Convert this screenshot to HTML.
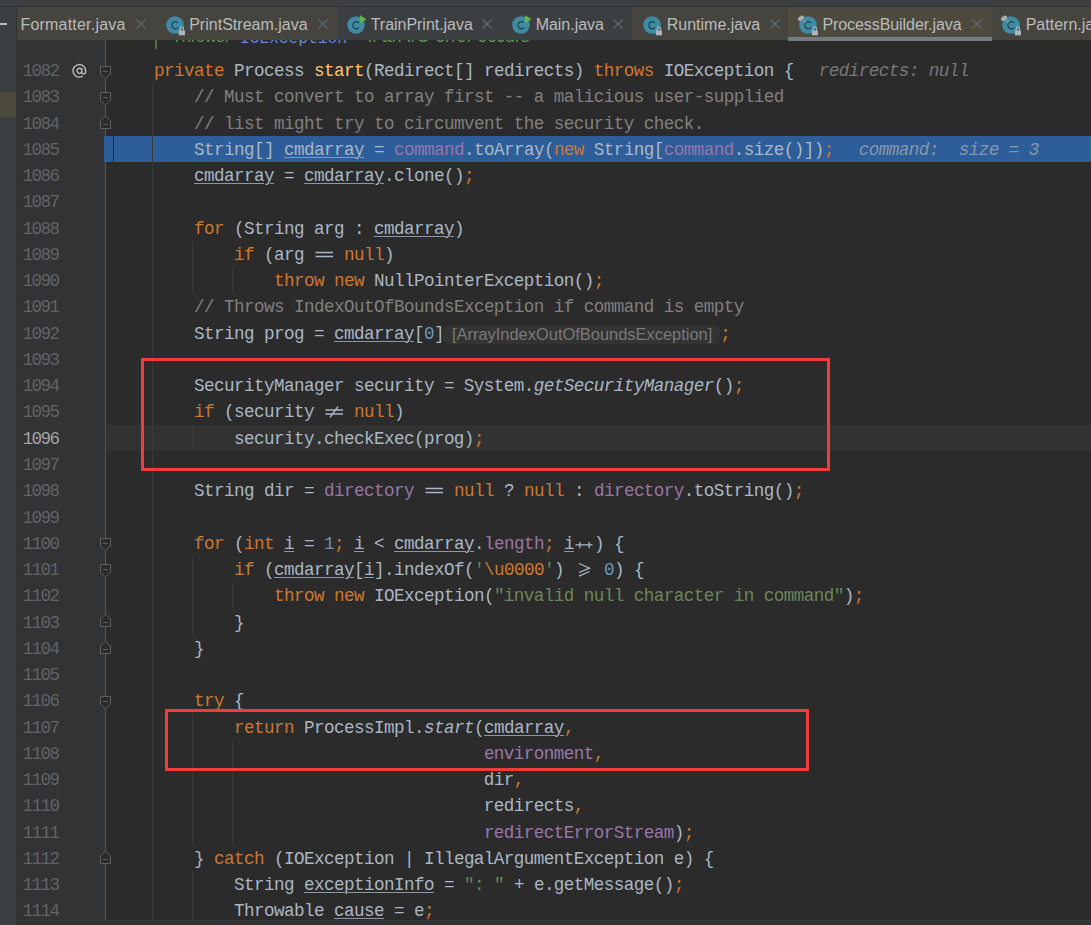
<!DOCTYPE html>
<html><head><meta charset="utf-8"><style>
*{margin:0;padding:0;box-sizing:border-box}
html,body{width:1091px;height:925px;overflow:hidden;background:#2b2b2b}
body{position:relative;font-family:"Liberation Mono",monospace}
.abs{position:absolute}
.ln{position:absolute;left:114px;height:26.260px;line-height:26.260px;font-size:17.600px;letter-spacing:-0.5617px;white-space:pre;color:#a9b7c6}
.k{color:#cc7832}.c{color:#808080}.f{color:#9876aa}.n{color:#6897bb}.s{color:#6a8759}.fn{color:#ffc66d}
.i{font-style:italic}.u{text-decoration:underline;text-decoration-thickness:1px;text-underline-offset:2px;text-decoration-color:#8b96a8}
.e{color:#cc7832}
.lig{position:relative;display:inline-block;width:20px;height:0;letter-spacing:0}
.num{position:absolute;left:0;width:58.5px;text-align:right;height:26.260px;line-height:26.260px;font-size:17.600px;letter-spacing:-1.56px;color:#606366;white-space:pre}
.hint{color:#787878;font-style:italic;margin-left:25px}
.inlay{display:inline-block;font-family:"Liberation Sans",sans-serif;font-size:16.45px;letter-spacing:0;color:#7a7a7a;background:#333333;border-radius:6px;height:19px;line-height:19px;vertical-align:-1px;padding:0 8px 0 9px;margin:0 0 0 -1px}
.guide{position:absolute;width:1px;background:#393939}
.fold{position:absolute;left:100px}
.tab{position:absolute;top:8.4px;height:33px;font-family:"Liberation Sans",sans-serif;font-size:16px;color:#bbbbbb;line-height:33px;white-space:pre}
.tab .t{position:absolute;top:0}
.tab .x{position:absolute;top:12px}
.redbox{position:absolute;border:3px solid #f23c3c}
</style></head><body>

<div class="abs" style="left:0;top:0;width:1091px;height:6px;background:#3c3f41"></div>
<div class="abs" style="left:0;top:6px;width:1091px;height:1px;background:#2e3032"></div>
<div class="abs" style="left:0;top:7px;width:1091px;height:33px;background:#3c3f41"></div>
<div class="abs" style="left:0;top:40px;width:16px;height:885px;background:#3c3f41"></div>
<div class="abs" style="left:0;top:92px;width:16px;height:25px;background:#4d4a3e"></div>
<div class="abs" style="left:16px;top:40px;width:89px;height:880px;background:#313335"></div>
<div class="abs" style="left:16px;top:920px;width:1075px;height:5px;background:#313335"></div>
<div class="abs" style="left:16px;top:920px;width:1075px;height:1px;background:#393b3d"></div>
<div class="abs" style="left:104px;top:424.54px;width:987px;height:26.26px;background:#323232"></div>
<div class="abs" style="left:104px;top:135.68px;width:987px;height:26.26px;background:#2d5e99"></div>
<div class="abs" style="left:113px;top:135.68px;width:1px;height:26.26px;background:#2b2b2b"></div>
<div class="abs" style="left:105px;top:40px;width:1px;height:880px;background:#555555"></div>
<div class="guide" style="left:152px;top:83.16px;height:840.32px"></div>
<div class="guide" style="left:192px;top:240.72px;height:52.52px"></div>
<div class="guide" style="left:232px;top:266.98px;height:26.26px"></div>
<div class="guide" style="left:192px;top:555.84px;height:78.78px"></div>
<div class="guide" style="left:232px;top:582.10px;height:26.26px"></div>
<div class="guide" style="left:192px;top:424.54px;height:26.26px"></div>
<div class="guide" style="left:192px;top:713.40px;height:131.30px"></div>
<div class="guide" style="left:232px;top:739.66px;height:105.04px"></div>
<div class="guide" style="left:192px;top:870.96px;height:52.52px"></div>
<div class="abs" style="left:155px;top:40px;width:2px;height:9px;background:#4f6f44"></div>
<div class="abs" style="left:172px;top:27px;height:19px;line-height:19px;font-family:'Liberation Sans',sans-serif;font-size:16px;white-space:pre;color:#629755">Throws:</div>
<div class="abs" style="left:240px;top:30px;height:19px;line-height:19px;font-size:16.2px;white-space:pre;color:#5f8ad6">IOException</div>
<div class="abs" style="left:368px;top:27px;height:19px;line-height:19px;font-family:'Liberation Sans',sans-serif;font-size:17.5px;letter-spacing:0.1px;white-space:pre;color:#629755">if an I/O error occurs</div>
<div class="ln" style="top:58.087px">    <span class="k">private</span> Process <span class="fn">start</span>(Redirect[] redirects) <span class="k">throws</span> IOException {<span class="hint">redirects: null</span></div>
<div class="num" style="top:58.087px;color:#606366">1082</div>
<div class="ln" style="top:84.347px">        <span class="c">// Must convert to array first -- a malicious user-supplied</span></div>
<div class="num" style="top:84.347px;color:#606366">1083</div>
<div class="ln" style="top:110.607px">        <span class="c">// list might try to circumvent the security check.</span></div>
<div class="num" style="top:110.607px;color:#606366">1084</div>
<div class="ln" style="top:136.867px">        String[] <span class="u">cmdarray</span> = <span class="f">command</span>.toArray(<span class="k">new</span> String[<span class="f">command</span>.size()])<span class="k">;</span><span class="hint" style="color:#8797ae">command:  size = 3</span></div>
<div class="num" style="top:136.867px;color:#606366">1085</div>
<div class="ln" style="top:163.127px">        <span class="u">cmdarray</span> = <span class="u">cmdarray</span>.clone()<span class="k">;</span></div>
<div class="num" style="top:163.127px;color:#606366">1086</div>
<div class="ln" style="top:189.387px"></div>
<div class="num" style="top:189.387px;color:#606366">1087</div>
<div class="ln" style="top:215.647px">        <span class="k">for</span> (String arg : <span class="u">cmdarray</span>)</div>
<div class="num" style="top:215.647px;color:#606366">1088</div>
<div class="ln" style="top:241.907px">            <span class="k">if</span> (arg <span class="lig"><svg width="20" height="16" style="position:absolute;left:0;top:-13px" fill="none" stroke="#a9b7c6" stroke-width="1.3"><path d="M1.5,5.5 H19 M1.5,9.5 H19"/></svg></span> <span class="k">null</span>)</div>
<div class="num" style="top:241.907px;color:#606366">1089</div>
<div class="ln" style="top:268.167px">                <span class="k">throw new</span> NullPointerException()<span class="k">;</span></div>
<div class="num" style="top:268.167px;color:#606366">1090</div>
<div class="ln" style="top:294.427px">        <span class="c">// Throws IndexOutOfBoundsException if command is empty</span></div>
<div class="num" style="top:294.427px;color:#606366">1091</div>
<div class="ln" style="top:320.687px">        String prog = <span class="u">cmdarray</span>[<span class="n">0</span>]<span class="inlay">[ArrayIndexOutOfBoundsException]</span><span class="k">;</span></div>
<div class="num" style="top:320.687px;color:#606366">1092</div>
<div class="ln" style="top:346.947px"></div>
<div class="num" style="top:346.947px;color:#606366">1093</div>
<div class="ln" style="top:373.207px">        SecurityManager security = System.<span class="i">getSecurityManager</span>()<span class="k">;</span></div>
<div class="num" style="top:373.207px;color:#606366">1094</div>
<div class="ln" style="top:399.467px">        <span class="k">if</span> (security <span class="lig"><svg width="20" height="16" style="position:absolute;left:0;top:-13px" fill="none" stroke="#a9b7c6" stroke-width="1.3"><path d="M1.5,6 H19 M1.5,10 H19 M6,13.5 L14,2.5"/></svg></span> <span class="k">null</span>)</div>
<div class="num" style="top:399.467px;color:#606366">1095</div>
<div class="ln" style="top:425.727px">            security.checkExec(prog)<span class="k">;</span></div>
<div class="num" style="top:425.727px;color:#a4a3a3">1096</div>
<div class="ln" style="top:451.987px"></div>
<div class="num" style="top:451.987px;color:#606366">1097</div>
<div class="ln" style="top:478.247px">        String dir = <span class="f">directory</span> <span class="lig"><svg width="20" height="16" style="position:absolute;left:0;top:-13px" fill="none" stroke="#a9b7c6" stroke-width="1.3"><path d="M1.5,5.5 H19 M1.5,9.5 H19"/></svg></span> <span class="k">null</span> ? <span class="k">null</span> : <span class="f">directory</span>.toString()<span class="k">;</span></div>
<div class="num" style="top:478.247px;color:#606366">1098</div>
<div class="ln" style="top:504.507px"></div>
<div class="num" style="top:504.507px;color:#606366">1099</div>
<div class="ln" style="top:530.767px">        <span class="k">for</span> (<span class="k">int</span> <span class="u">i</span> = <span class="n">1</span><span class="k">;</span> <span class="u">i</span> &lt; <span class="u">cmdarray</span>.<span class="f">length</span><span class="k">;</span> <span class="u">i</span><span class="lig"><svg width="20" height="16" style="position:absolute;left:0;top:-13px" fill="none" stroke="#a9b7c6" stroke-width="1.3"><path d="M1.5,8.8 H18.5 M5.8,6 V12.2 M15.2,6 V12.2"/></svg></span>) {</div>
<div class="num" style="top:530.767px;color:#606366">1100</div>
<div class="ln" style="top:557.027px">            <span class="k">if</span> (<span class="u">cmdarray</span>[<span class="u">i</span>].indexOf(<span class="s">&#x27;</span><span class="e">\u0000</span><span class="s">&#x27;</span>) <span class="lig"><svg width="20" height="16" style="position:absolute;left:0;top:-13px" fill="none" stroke="#a9b7c6" stroke-width="1.3"><path d="M5,1.5 L15.5,6.2 L5,10.5 M5,14.2 L15.5,9.5"/></svg></span> <span class="n">0</span>) {</div>
<div class="num" style="top:557.027px;color:#606366">1101</div>
<div class="ln" style="top:583.287px">                <span class="k">throw new</span> IOException(<span class="s">&quot;invalid null character in command&quot;</span>)<span class="k">;</span></div>
<div class="num" style="top:583.287px;color:#606366">1102</div>
<div class="ln" style="top:609.547px">            }</div>
<div class="num" style="top:609.547px;color:#606366">1103</div>
<div class="ln" style="top:635.807px">        }</div>
<div class="num" style="top:635.807px;color:#606366">1104</div>
<div class="ln" style="top:662.067px"></div>
<div class="num" style="top:662.067px;color:#606366">1105</div>
<div class="ln" style="top:688.327px">        <span class="k">try</span> {</div>
<div class="num" style="top:688.327px;color:#606366">1106</div>
<div class="ln" style="top:714.587px">            <span class="k">return</span> ProcessImpl.<span class="i">start</span>(<span class="u">cmdarray</span><span class="k">,</span></div>
<div class="num" style="top:714.587px;color:#606366">1107</div>
<div class="ln" style="top:740.847px">                                     <span class="f">environment</span><span class="k">,</span></div>
<div class="num" style="top:740.847px;color:#606366">1108</div>
<div class="ln" style="top:767.107px">                                     dir<span class="k">,</span></div>
<div class="num" style="top:767.107px;color:#606366">1109</div>
<div class="ln" style="top:793.367px">                                     redirects<span class="k">,</span></div>
<div class="num" style="top:793.367px;color:#606366">1110</div>
<div class="ln" style="top:819.627px">                                     <span class="f">redirectErrorStream</span>)<span class="k">;</span></div>
<div class="num" style="top:819.627px;color:#606366">1111</div>
<div class="ln" style="top:845.887px">        } <span class="k">catch</span> (IOException | IllegalArgumentException e) {</div>
<div class="num" style="top:845.887px;color:#606366">1112</div>
<div class="ln" style="top:872.147px">            String <span class="u">exceptionInfo</span> = <span class="s">&quot;: &quot;</span> + e.getMessage()<span class="k">;</span></div>
<div class="num" style="top:872.147px;color:#606366">1113</div>
<div class="ln" style="top:898.407px">            Throwable <span class="u">cause</span> = e<span class="k">;</span></div>
<div class="num" style="top:898.407px;color:#606366">1114</div>
<svg class="abs" style="left:72px;top:62.90px" width="16" height="16" fill="none" stroke="#bdbdbd" stroke-width="1.4"><path d="M10.6,13.2 A6.3,6.3 0 1 1 13.6,8 V9 A1.9,1.9 0 0 1 9.8,9 V5 M9.8,8 A2.4,2.6 0 1 1 9.8,7.6"/></svg>
<svg class="fold" style="top:66.00px" width="11" height="14"><path d="M0.5,0.5 H10.5 V8 L5.5,13 L0.5,8 Z" fill="#2b2b2b" stroke="#5f5f5f" stroke-width="1"/><path d="M3,5.5 H8" stroke="#5f5f5f" stroke-width="1"/></svg>
<svg class="fold" style="top:92.00px" width="11" height="14"><path d="M0.5,0.5 H10.5 V8 L5.5,13 L0.5,8 Z" fill="#2b2b2b" stroke="#5f5f5f" stroke-width="1"/><path d="M3,5.5 H8" stroke="#5f5f5f" stroke-width="1"/></svg>
<svg class="fold" style="top:538.00px" width="11" height="14"><path d="M0.5,0.5 H10.5 V8 L5.5,13 L0.5,8 Z" fill="#2b2b2b" stroke="#5f5f5f" stroke-width="1"/><path d="M3,5.5 H8" stroke="#5f5f5f" stroke-width="1"/></svg>
<svg class="fold" style="top:564.00px" width="11" height="14"><path d="M0.5,0.5 H10.5 V8 L5.5,13 L0.5,8 Z" fill="#2b2b2b" stroke="#5f5f5f" stroke-width="1"/><path d="M3,5.5 H8" stroke="#5f5f5f" stroke-width="1"/></svg>
<svg class="fold" style="top:696.00px" width="11" height="14"><path d="M0.5,0.5 H10.5 V8 L5.5,13 L0.5,8 Z" fill="#2b2b2b" stroke="#5f5f5f" stroke-width="1"/><path d="M3,5.5 H8" stroke="#5f5f5f" stroke-width="1"/></svg>
<svg class="fold" style="top:115.00px" width="11" height="14"><path d="M0.5,13.5 H10.5 V6 L5.5,1 L0.5,6 Z" fill="#2b2b2b" stroke="#5f5f5f" stroke-width="1"/><path d="M3,9.5 H8" stroke="#5f5f5f" stroke-width="1"/></svg>
<svg class="fold" style="top:613.00px" width="11" height="14"><path d="M0.5,13.5 H10.5 V6 L5.5,1 L0.5,6 Z" fill="#2b2b2b" stroke="#5f5f5f" stroke-width="1"/><path d="M3,9.5 H8" stroke="#5f5f5f" stroke-width="1"/></svg>
<svg class="fold" style="top:640.00px" width="11" height="14"><path d="M0.5,13.5 H10.5 V6 L5.5,1 L0.5,6 Z" fill="#2b2b2b" stroke="#5f5f5f" stroke-width="1"/><path d="M3,9.5 H8" stroke="#5f5f5f" stroke-width="1"/></svg>
<svg class="fold" style="top:850.00px" width="11" height="14"><path d="M0.5,13.5 H10.5 V6 L5.5,1 L0.5,6 Z" fill="#2b2b2b" stroke="#5f5f5f" stroke-width="1"/><path d="M3,9.5 H8" stroke="#5f5f5f" stroke-width="1"/></svg>
<div class="redbox" style="left:141px;top:358px;width:689px;height:113px"></div>
<div class="redbox" style="left:165px;top:709px;width:644px;height:62px"></div>
<div class="abs" style="left:17px;top:7px;width:320px;height:33px;background:#45443e"></div>
<div class="abs" style="left:337px;top:7px;width:295px;height:33px;background:#3c3f41"></div>
<div class="abs" style="left:632px;top:7px;width:156px;height:33px;background:#45443e"></div>
<div class="abs" style="left:788px;top:7px;width:204px;height:33px;background:#4d4a40"></div>
<div class="abs" style="left:992px;top:7px;width:99px;height:33px;background:#45443e"></div>
<div class="abs" style="left:16px;top:7px;width:1px;height:33px;background:#2f3133"></div>
<div class="abs" style="left:0;top:23px;width:7px;height:2px;background:#c0c0c0"></div>
<div class="abs" style="left:788px;top:37px;width:204px;height:4px;background:#767b81"></div>
<div class="tab" style="left:20.40px;letter-spacing:0.214px">Formatter.java</div>
<svg class="abs" style="left:135.9px;top:19.2px" width="10" height="10"><path d="M0.5,0.5 L9.5,9.5 M9.5,0.5 L0.5,9.5" stroke="#666c6c" stroke-width="1.1"/></svg>
<svg class="abs" style="left:166.3px;top:15.8px;overflow:visible" width="24" height="21"><circle cx="9" cy="9" r="8.8" fill="#3f8aa5"/><path d="M11.9,6.9 A3.4,3.6 0 1 0 11.9,11.6" fill="none" stroke="#24404a" stroke-width="1.35"/><rect x="12.8" y="14.5" width="6.2" height="4.8" fill="#adb6bc"/><path d="M14.3,14.5 V12.5 A1.6,1.8 0 0 1 17.5,12.5 V14.5" fill="none" stroke="#adb6bc" stroke-width="1.1"/></svg>
<div class="tab" style="left:189.20px;letter-spacing:0.013px">PrintStream.java</div>
<svg class="abs" style="left:317.6px;top:19.2px" width="10" height="10"><path d="M0.5,0.5 L9.5,9.5 M9.5,0.5 L0.5,9.5" stroke="#666c6c" stroke-width="1.1"/></svg>
<svg class="abs" style="left:347.1px;top:15.8px;overflow:visible" width="24" height="21"><circle cx="9" cy="9" r="8.8" fill="#3f8aa5"/><path d="M11.9,6.9 A3.4,3.6 0 1 0 11.9,11.6" fill="none" stroke="#24404a" stroke-width="1.35"/><path d="M12.8,-1 L19.5,3.3 L12.8,7.6 Z" fill="#62b543"/></svg>
<div class="tab" style="left:370.70px;letter-spacing:-0.027px">TrainPrint.java</div>
<svg class="abs" style="left:482.2px;top:19.2px" width="10" height="10"><path d="M0.5,0.5 L9.5,9.5 M9.5,0.5 L0.5,9.5" stroke="#666c6c" stroke-width="1.1"/></svg>
<svg class="abs" style="left:511.8px;top:15.8px;overflow:visible" width="24" height="21"><circle cx="9" cy="9" r="8.8" fill="#3f8aa5"/><path d="M11.9,6.9 A3.4,3.6 0 1 0 11.9,11.6" fill="none" stroke="#24404a" stroke-width="1.35"/><path d="M12.8,-1 L19.5,3.3 L12.8,7.6 Z" fill="#62b543"/></svg>
<div class="tab" style="left:535.70px;letter-spacing:-0.033px">Main.java</div>
<svg class="abs" style="left:613.2px;top:19.2px" width="10" height="10"><path d="M0.5,0.5 L9.5,9.5 M9.5,0.5 L0.5,9.5" stroke="#666c6c" stroke-width="1.1"/></svg>
<svg class="abs" style="left:643.0px;top:15.8px;overflow:visible" width="24" height="21"><circle cx="9" cy="9" r="8.8" fill="#3f8aa5"/><path d="M11.9,6.9 A3.4,3.6 0 1 0 11.9,11.6" fill="none" stroke="#24404a" stroke-width="1.35"/><rect x="12.8" y="14.5" width="6.2" height="4.8" fill="#adb6bc"/><path d="M14.3,14.5 V12.5 A1.6,1.8 0 0 1 17.5,12.5 V14.5" fill="none" stroke="#adb6bc" stroke-width="1.1"/></svg>
<div class="tab" style="left:666.70px;letter-spacing:0.008px">Runtime.java</div>
<svg class="abs" style="left:770.2px;top:19.2px" width="10" height="10"><path d="M0.5,0.5 L9.5,9.5 M9.5,0.5 L0.5,9.5" stroke="#666c6c" stroke-width="1.1"/></svg>
<svg class="abs" style="left:798.9px;top:15.8px;overflow:visible" width="24" height="21"><circle cx="9" cy="9" r="8.8" fill="#3f8aa5"/><path d="M11.9,6.9 A3.4,3.6 0 1 0 11.9,11.6" fill="none" stroke="#24404a" stroke-width="1.35"/><rect x="12.8" y="14.5" width="6.2" height="4.8" fill="#adb6bc"/><path d="M14.3,14.5 V12.5 A1.6,1.8 0 0 1 17.5,12.5 V14.5" fill="none" stroke="#adb6bc" stroke-width="1.1"/><ellipse cx="2" cy="2.2" rx="3.4" ry="2.1" transform="rotate(-35 2 2.2)" fill="#a8aeb0"/><path d="M4.6,4.6 L6.6,6.4" stroke="#a8aeb0" stroke-width="1.2"/></svg>
<div class="tab" style="left:822.40px;letter-spacing:-0.074px">ProcessBuilder.java</div>
<svg class="abs" style="left:972.0px;top:19.2px" width="10" height="10"><path d="M0.5,0.5 L9.5,9.5 M9.5,0.5 L0.5,9.5" stroke="#666c6c" stroke-width="1.1"/></svg>
<svg class="abs" style="left:1001.8px;top:15.8px;overflow:visible" width="24" height="21"><circle cx="9" cy="9" r="8.8" fill="#3f8aa5"/><path d="M11.9,6.9 A3.4,3.6 0 1 0 11.9,11.6" fill="none" stroke="#24404a" stroke-width="1.35"/><rect x="12.8" y="14.5" width="6.2" height="4.8" fill="#adb6bc"/><path d="M14.3,14.5 V12.5 A1.6,1.8 0 0 1 17.5,12.5 V14.5" fill="none" stroke="#adb6bc" stroke-width="1.1"/><ellipse cx="2" cy="2.2" rx="3.4" ry="2.1" transform="rotate(-35 2 2.2)" fill="#a8aeb0"/><path d="M4.6,4.6 L6.6,6.4" stroke="#a8aeb0" stroke-width="1.2"/></svg>
<div class="tab" style="left:1025.70px;letter-spacing:0.000px">Pattern.java</div>
<svg class="abs" style="left:1200.0px;top:19.2px" width="10" height="10"><path d="M0.5,0.5 L9.5,9.5 M9.5,0.5 L0.5,9.5" stroke="#666c6c" stroke-width="1.1"/></svg>
</body></html>
